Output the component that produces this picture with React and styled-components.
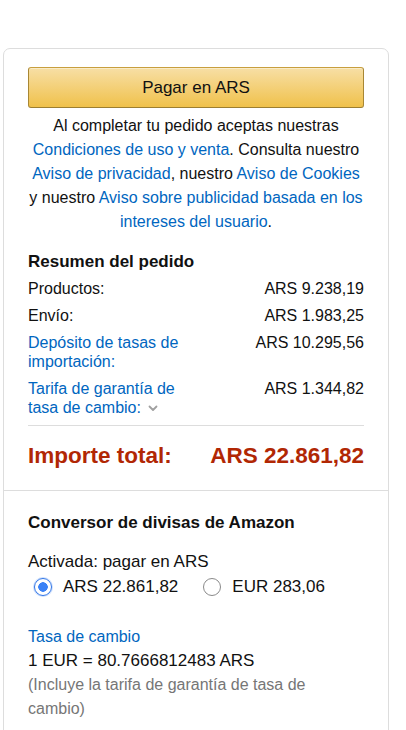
import React from "react";
import styled, { createGlobalStyle } from "styled-components";

const GlobalStyle = createGlobalStyle`
  html, body {
    margin: 0;
    padding: 0;
    background: #ffffff;
    font-family: "Liberation Sans", Arial, sans-serif;
    color: #111111;
  }
  body {
    height: 730px;
    overflow: hidden;
  }
`;

const Page = styled("div")({
    padding: "48px 17px 0 3px",
})

const Card = styled("div")({
    border: "1px solid #dddddd",
    borderRadius: "7px",
    background: "#ffffff",
    height: "720px",
})

const Section = styled("div")(({ $top }) => ({
    padding: $top ? "18px 24px 21px 24px" : "21px 24px 0 24px",
    borderTop: $top ? "none" : "1px solid #dddddd",
}))

const PayButton = styled("button")({
    display: "block",
    width: "100%",
    height: "41px",
    borderRadius: "3px",
    border: "1px solid #a88734",
    borderColor: "#c89f3e #a88734 #9c7e31",
    background: "linear-gradient(to bottom, #f7dfa5, #f0c14b)",
    boxShadow: "inset 0 1px 0 rgba(255,255,255,.4)",
    fontFamily: "\"Liberation Sans\", Arial, sans-serif",
    fontSize: "17px",
    color: "#111111",
    cursor: "pointer",
    padding: 0,
})

const Legal = styled("p")({
    margin: "6px -4px 0 -4px",
    textAlign: "center",
    fontSize: "16px",
    lineHeight: "24px",
    whiteSpace: "nowrap",
})

const Link = styled("a")({
    color: "#0066c0",
    textDecoration: "none",
})

const Heading = styled("h3")(({ $gap }) => ({
    margin: `0 0 ${$gap || 6}px 0`,
    fontSize: "17px",
    fontWeight: 700,
    lineHeight: "22px",
}))

const SummaryBlock = styled("div")({
    marginTop: "17px",
})

const Row = styled("div")({
    display: "flex",
    justifyContent: "space-between",
    alignItems: "flex-start",
    fontSize: "16px",
    lineHeight: "19px",
    marginBottom: "8px",
})

const Label = styled("span")(({ $link }) => ({
    color: $link ? "#0066c0" : "#111111",
    maxWidth: "175px",
}))

const Chevron = styled("svg")({
    width: "10px",
    height: "7px",
    marginLeft: "7px",
    verticalAlign: "1px",
})

const Divider = styled("hr")({
    border: "none",
    borderTop: "1px solid #dddddd",
    margin: "6px 0 17px 0",
})

const TotalRow = styled("div")({
    display: "flex",
    justifyContent: "space-between",
    color: "#b12704",
    fontWeight: 700,
    fontSize: "22.5px",
    lineHeight: "26px",
})

const Text = styled("div")(({ $muted }) => ({
    fontSize: $muted ? "16px" : "17px",
    lineHeight: "24px",
    color: $muted ? "#767676" : "#111111",
    maxWidth: $muted ? "300px" : "none",
}))

const Radios = styled("div")({
    display: "flex",
    alignItems: "center",
    gap: "25px",
    paddingLeft: "6px",
    marginBottom: "25px",
})

const RadioOption = styled("label")({
    display: "flex",
    alignItems: "center",
    gap: "11px",
    fontSize: "17px",
    lineHeight: "26px",
    color: "#111111",
})

const RadioDot = styled("span")(({ $checked }) => ({
    width: "18px",
    height: "18px",
    boxSizing: "border-box",
    borderRadius: "50%",
    border: $checked ? "1.5px solid #2f74e6" : "1.5px solid #8a8a8a",
    background: $checked ? "radial-gradient(circle, #3b82f6 0 4.5px, #ffffff 5px)" : "#ffffff",
    boxShadow: $checked ? "0 0 0 1px rgba(59,130,246,.25)" : "none",
}))

const RateLink = styled("div")({
    fontSize: "16px",
    lineHeight: "24px",
    color: "#0066c0",
})

export default function App() {
    return (
        <Page>
            <GlobalStyle />
            <Card>
                <Section $top>
                    <PayButton>Pagar en ARS</PayButton>
                    <Legal>
                        Al completar tu pedido aceptas nuestras<br />
                        <Link href="#">Condiciones de uso y venta</Link>. Consulta nuestro<br />
                        <Link href="#">Aviso de privacidad</Link>, nuestro{" "}
                        <Link href="#">Aviso de Cookies</Link><br />
                        y nuestro{" "}
                        <Link href="#">Aviso sobre publicidad basada en los<br />intereses del usuario</Link>.
                    </Legal>
                    <SummaryBlock>
                        <Heading>Resumen del pedido</Heading>
                        <Row>
                            <Label>Productos:</Label>
                            <span>ARS 9.238,19</span>
                        </Row>
                        <Row>
                            <Label>Envío:</Label>
                            <span>ARS 1.983,25</span>
                        </Row>
                        <Row>
                            <Label $link>Depósito de tasas de importación:</Label>
                            <span>ARS 10.295,56</span>
                        </Row>
                        <Row>
                            <Label $link>
                                Tarifa de garantía de tasa de cambio:
                                <Chevron viewBox="0 0 10 7">
                                    <path d="M1.5 1.5 L5 5 L8.5 1.5" fill="none" stroke="#a0a0a0" strokeWidth="1.8" strokeLinecap="round" strokeLinejoin="round" />
                                </Chevron>
                            </Label>
                            <span>ARS 1.344,82</span>
                        </Row>
                    </SummaryBlock>
                    <Divider />
                    <TotalRow>
                        <span>Importe total:</span>
                        <span>ARS 22.861,82</span>
                    </TotalRow>
                </Section>
                <Section>
                    <Heading $gap={16}>Conversor de divisas de Amazon</Heading>
                    <Text>Activada: pagar en ARS</Text>
                    <Radios>
                        <RadioOption>
                            <RadioDot $checked />
                            ARS 22.861,82
                        </RadioOption>
                        <RadioOption>
                            <RadioDot />
                            EUR 283,06
                        </RadioOption>
                    </Radios>
                    <RateLink>Tasa de cambio</RateLink>
                    <Text>1 EUR = 80.7666812483 ARS</Text>
                    <Text $muted>(Incluye la tarifa de garantía de tasa de cambio)</Text>
                </Section>
            </Card>
        </Page>
    )
}
